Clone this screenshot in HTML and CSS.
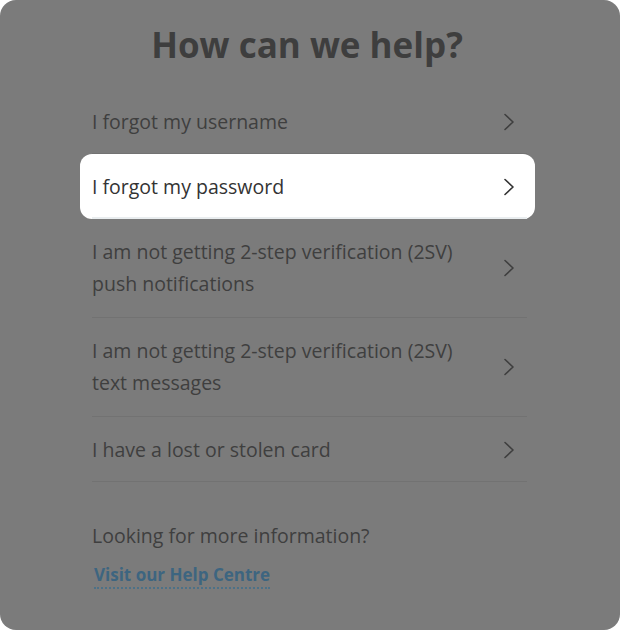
FILE: index.html
```html
<!DOCTYPE html>
<html lang="en">
<head>
<meta charset="utf-8">
<title>How can we help?</title>
<link rel="stylesheet" href="styles.css">
</head>
<body>
<div class="card">
  <h1 class="title">How can we help?</h1>
  <ul class="list">
    <li class="row"><div class="row-inner"><span class="label">I forgot my username</span><svg class="chev" viewBox="0 0 12 18" width="12" height="18"><path d="M2 1.5 L10 9 L2 16.5" fill="none" stroke="currentColor" stroke-width="1.6" stroke-linecap="round" stroke-linejoin="round"/></svg></div></li>
    <li class="row row-active"><div class="row-inner"><span class="label">I forgot my password</span><svg class="chev" viewBox="0 0 12 18" width="12" height="18"><path d="M2 1.5 L10 9 L2 16.5" fill="none" stroke="currentColor" stroke-width="1.6" stroke-linecap="round" stroke-linejoin="round"/></svg></div></li>
    <li class="row row-tall"><div class="row-inner"><span class="label">I am not getting 2-step verification (2SV)<br>push notifications</span><svg class="chev" viewBox="0 0 12 18" width="12" height="18"><path d="M2 1.5 L10 9 L2 16.5" fill="none" stroke="currentColor" stroke-width="1.6" stroke-linecap="round" stroke-linejoin="round"/></svg></div></li>
    <li class="row row-tall"><div class="row-inner"><span class="label">I am not getting 2-step verification (2SV)<br>text messages</span><svg class="chev" viewBox="0 0 12 18" width="12" height="18"><path d="M2 1.5 L10 9 L2 16.5" fill="none" stroke="currentColor" stroke-width="1.6" stroke-linecap="round" stroke-linejoin="round"/></svg></div></li>
    <li class="row"><div class="row-inner"><span class="label">I have a lost or stolen card</span><svg class="chev" viewBox="0 0 12 18" width="12" height="18"><path d="M2 1.5 L10 9 L2 16.5" fill="none" stroke="currentColor" stroke-width="1.6" stroke-linecap="round" stroke-linejoin="round"/></svg></div></li>
  </ul>
  <div class="more">
    <p class="more-text">Looking for more information?</p>
    <a class="more-link" href="#">Visit our Help Centre</a>
  </div>
</div>
</body>
</html>
```
FILE: styles.css
```css
* { box-sizing: border-box; }
html, body { margin: 0; padding: 0; background: #ffffff; }
body { width: 620px; height: 630px; overflow: hidden; }
.card {
  width: 620px;
  height: 630px;
  background: #7b7b7b;
  border-radius: 16px;
  padding-top: 23px;
  font-family: "Open Sans", "Noto Sans", sans-serif;
}
.title {
  margin: 0;
  padding-right: 6px;
  text-align: center;
  font-family: "Open Sans", "Noto Sans", sans-serif;
  font-weight: 700;
  font-size: 35px;
  line-height: 44px;
  color: #3e3e3e;
}
.list {
  list-style: none;
  margin: 22px 0 0 80px;
  padding: 0;
  width: 455px;
}
.row {
  padding: 0 8px 0 12px;
  border-radius: 12px;
}
.row-inner {
  display: flex;
  align-items: center;
  justify-content: space-between;
  padding: 17px 12px 15px 0;
  border-bottom: 1px solid #727272;
}
.row-tall .row-inner { padding-top: 17px; padding-bottom: 17px; }
.label {
  font-size: 19.5px;
  line-height: 32px;
  color: #3f3f3f;
}
.chev { color: #3f3f3f; flex: none; }
.row-active { background: #ffffff; }
.row-active .row-inner { border-bottom: 2px solid #e9edef; padding-top: 17px; padding-bottom: 14px; }
.row-active .label, .row-active .chev { color: #333333; }
.more { padding: 40px 0 0 92px; }
.more-text {
  margin: 0;
  font-size: 19.5px;
  line-height: 28px;
  color: #3f3f3f;
}
.more-link {
  display: inline-block;
  margin: 14px 0 0 2px;
  padding-bottom: 1px;
  font-size: 17px;
  font-weight: 700;
  line-height: 22px;
  color: #3d6580;
  text-decoration: none;
  border-bottom: 2px dotted #4d7187;
}
```
